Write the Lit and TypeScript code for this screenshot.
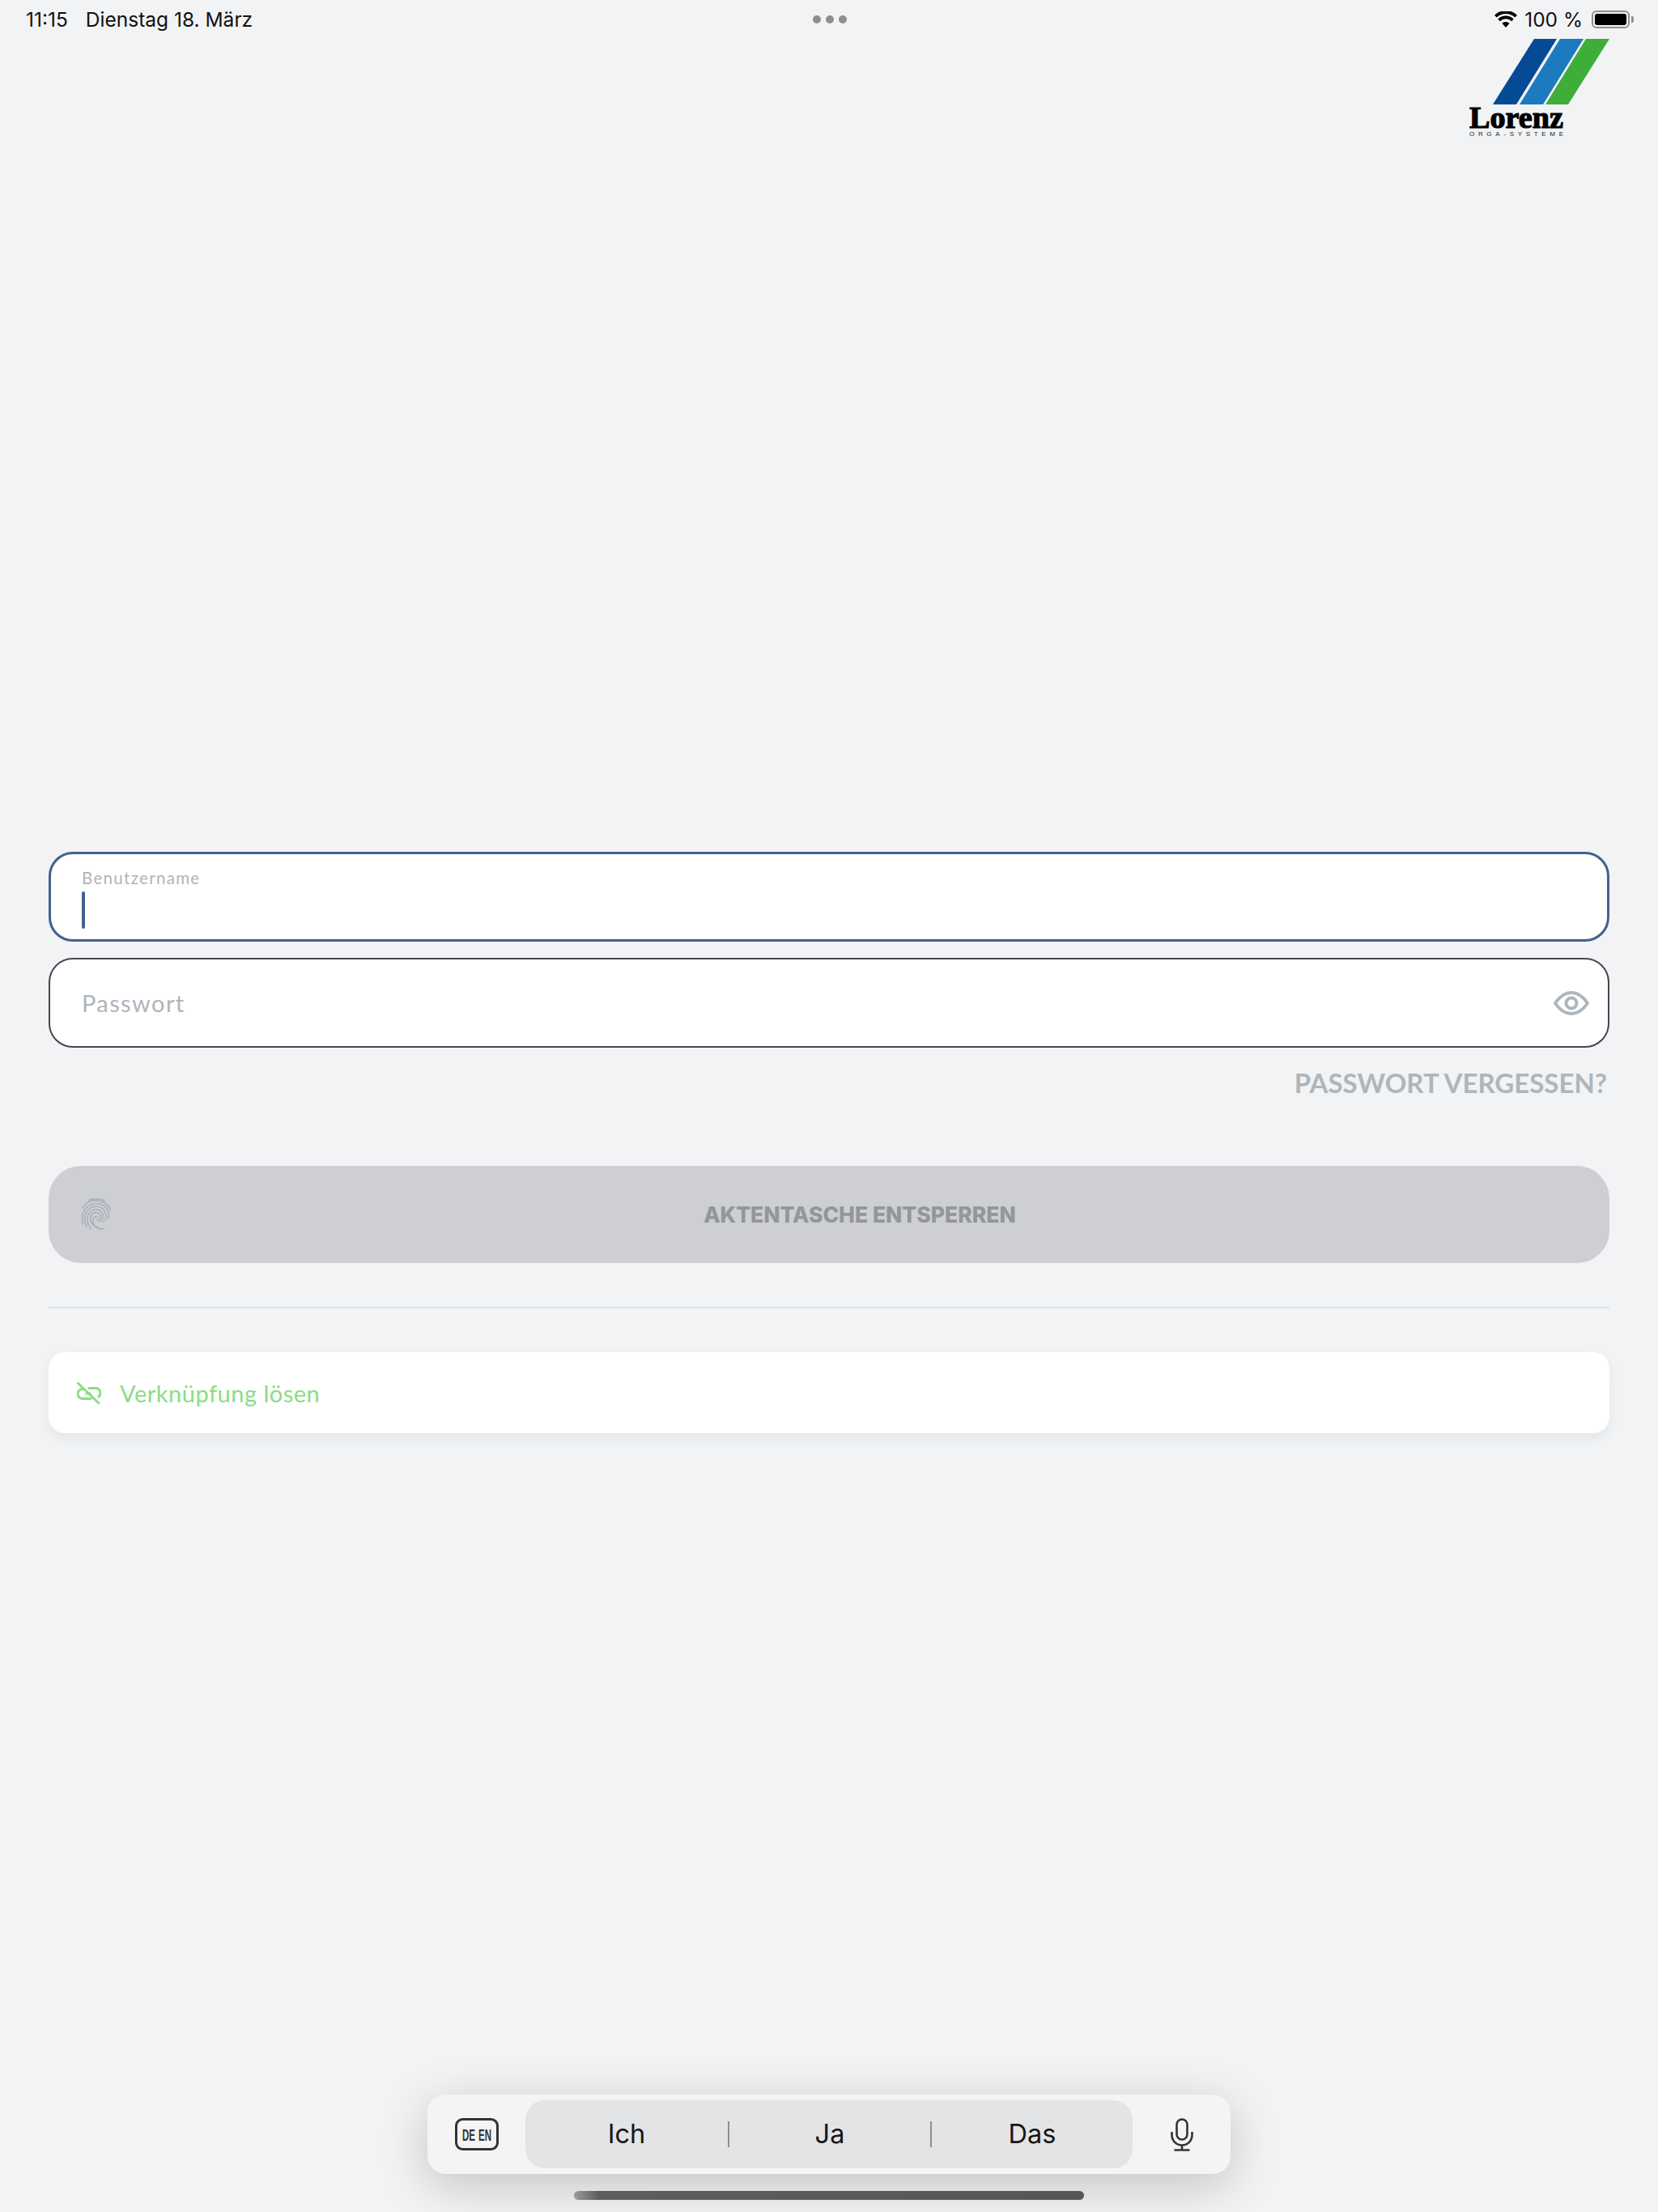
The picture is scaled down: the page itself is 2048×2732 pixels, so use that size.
import { LitElement, html, css } from "lit";
import { customElement } from "lit/decorators.js";

@customElement("app-root")
export class AppRoot extends LitElement {
  static styles = css`
    :host { display: block; }
    .page {
      min-height: 2732px; box-sizing: border-box; background: #f1f3f5;
      display: flex; flex-direction: column; overflow: hidden;
      font-family: "Lato", "Noto Sans", sans-serif;
    }
    .status {
      height: 48px; box-sizing: border-box; padding: 0 30px 0 32px;
      display: grid; grid-template-columns: 1fr auto 1fr; align-items: center;
      font-family: "Inter", sans-serif; font-size: 24.5px; color: #111;
    }
    .status-left { display: flex; gap: 22px; }
    .dots { display: flex; gap: 6px; }
    .dots i { width: 10px; height: 10px; border-radius: 50%; background: #8e8e90; }
    .status-right { display: flex; align-items: center; justify-content: flex-end; gap: 9px; }
    .battery-wrap { display: flex; align-items: center; gap: 2px; margin-left: 2px; }
    .battery { width: 47px; height: 22px; box-sizing: border-box; border: 2px solid #8f8f91; border-radius: 6px; padding: 2px; }
    .battery i { display: block; height: 100%; background: #000; border-radius: 3px; }
    .nub { width: 3px; height: 8px; background: #8f8f91; border-radius: 0 2px 2px 0; }
    .logo-row { display: flex; justify-content: flex-end; padding: 0 60px; }
    .logo { display: block; width: 173px; height: 121px; }
    .logo .name { font-family: "Liberation Serif", serif; font-weight: 700; font-size: 38px; fill: #000; stroke: #000; stroke-width: 1.2px; }
    .logo .sub { font-family: "Liberation Sans", sans-serif; font-size: 8px; fill: #222; }
    .form { margin-top: 883px; padding: 0 60px; display: flex; flex-direction: column; }
    .field {
      height: 111px; box-sizing: border-box; background: #fff; border-radius: 30px;
      position: relative; display: flex; align-items: center;
    }
    .field.focus { border: 3px solid #43608f; flex-direction: column; align-items: flex-start; padding: 17px 0 0 38px; }
    .field.pass { border: 2px solid #44454f; margin-top: 20px; padding: 0 23px 0 39px; justify-content: space-between; }
    .mini { font-size: 20.5px; line-height: 24px; letter-spacing: 1.3px; color: #adb5bd; }
    .caret { width: 4px; height: 46px; margin-top: 5px; border-radius: 2px; background: #43608f; }
    .ph { font-size: 29px; letter-spacing: 1.4px; color: #adb5bd; }
    .eye { width: 44px; height: 30px; display: block; }
    .forgot {
      align-self: flex-end; margin: 23px 3px 0 0; font-size: 33px; line-height: 40px;
      font-weight: 700; color: #aeb6bc; white-space: nowrap;
    }
    .unlock {
      margin-top: 83px; height: 120px; border-radius: 40px; background: #cdcfd2;
      display: flex; align-items: center; padding-left: 40px; position: relative;
    }
    .fp { width: 38px; height: 42px; display: block; }
    .unlock span {
      flex: 1; text-align: center; margin-left: -2px; font-family: "Inter", sans-serif; font-weight: 800;
      font-size: 26.5px; color: #93969a; white-space: nowrap; padding-left: 0;
    }
    .rule { height: 2px; background: #dde2e7; margin-top: 54px; }
    .card {
      margin-top: 54px; height: 100px; border-radius: 20px; background: #fff;
      box-shadow: 0 6px 14px rgba(40, 50, 60, 0.07);
      display: flex; align-items: center; padding-left: 35px; gap: 23px;
    }
    .card svg { width: 30px; height: 27px; display: block; }
    .card span { font-size: 29px; letter-spacing: 0.5px; color: #8bdc86; }
    .dock { margin-top: auto; display: flex; flex-direction: column; align-items: center; padding-bottom: 15px; }
    .bar {
      width: 992px; height: 98px; box-sizing: border-box; border-radius: 22px; background: #f4f4f6;
      box-shadow: 0 14px 60px rgba(0, 0, 0, 0.2);
      display: grid; grid-template-columns: 121px 750px 121px; padding-top: 7px;
    }
    .slot { display: flex; justify-content: center; height: 84px; align-items: center; }
    .slot svg { display: block; }
    .de { font-family: "Liberation Sans", sans-serif; font-weight: 700; font-size: 21px; fill: #333; }
    .sugg {
      height: 84px; background: #e3e4e6; border-radius: 24px;
      display: grid; grid-template-columns: repeat(3, 1fr); align-items: center;
      font-family: "Inter", sans-serif; font-size: 32.5px; color: #161616; text-align: center;
    }
    .sugg div { height: 32px; line-height: 32px; }
    .sugg div + div { border-left: 2px solid #8e8e90; }
    .home { width: 630px; height: 11px; margin-top: 21px; border-radius: 6px; background: linear-gradient(90deg, #9a9b9b 0, #5d5f5f 30px, #555757 100%); position: relative; }
  `;

  render() {
    return html`<div class="page">
      <div class="status">
        <div class="status-left"><span>11:15</span><span>Dienstag 18. März</span></div>
        <div class="dots"><i></i><i></i><i></i></div>
        <div class="status-right">
          <svg width="28" height="20" viewBox="0 0 28 20"><path d="M14 20l-4.600-5.200a6.500 6.500 0 0 1 9.200 0zM6.800 12.200l-2.500-2.800a13.800 13.800 0 0 1 19.400 0l-2.500 2.800a10.200 10.200 0 0 0-14.400 0zM2.700 7.600L0 4.700a20 20 0 0 1 28 0l-2.700 2.900a16.200 16.200 0 0 0-22.600 0z" fill="#000"/></svg>
          <span>100 %</span>
          <div class="battery-wrap"><div class="battery"><i></i></div><div class="nub"></div></div>
        </div>
      </div>
      <div class="logo-row">
        <svg class="logo" viewBox="0 0 173 121">
          <polygon points="80,0 108,0 58,81 29,81" fill="#044a94"/>
          <polygon points="112,0 141,0 91,81 62,81" fill="#1c7abf"/>
          <polygon points="144,0 173,0 122,81 94,81" fill="#3fae39"/>
          <text class="name" x="0" y="110" textLength="116" lengthAdjust="spacingAndGlyphs">Lorenz</text>
          <text class="sub" x="0" y="120" textLength="116">ORGA-SYSTEME</text>
        </svg>
      </div>
      <div class="form">
        <div class="field focus"><div class="mini">Benutzername</div><div class="caret"></div></div>
        <div class="field pass">
          <span class="ph">Passwort</span>
          <svg class="eye" viewBox="0 0 44 30" fill="none" stroke="#adb5bd" stroke-width="4">
            <path d="M2 15C8 6 14 2 22 2s14 4 20 13c-6 9-12 13-20 13S8 24 2 15z"/>
            <circle cx="22" cy="15" r="6.500"/>
          </svg>
        </div>
        <div class="forgot">PASSWORT VERGESSEN?</div>
        <div class="unlock">
          <svg class="fp" viewBox="0 0 38 42" fill="none" stroke="#a9b3bb" stroke-width="1.700" stroke-linecap="round">
            <path d="M10 3.500C15 .8 23 .8 29 4"/>
            <path d="M2 13C5 7 11 3.800 18 3.800 26 3.800 33 8 36.500 15"/>
            <path d="M2.500 33C.8 27 1 19 5 14.500 9 9.500 14 7.500 19 7.500c7 0 13 4 15 10 1 3 .8 6-.6 9"/>
            <path d="M7 36C4 30 3.500 23 7 17.500c3-4.500 7.500-6.500 12-6.500 6 0 11 4 12 9.500.6 4-1 8-4 9.500"/>
            <path d="M12.500 39C8 33 6.500 26 9.500 20.500 12 16 16 14.500 19.500 14.800c4.500.4 8 4 7.800 8.500-.2 3.500-3 6-6 5.600"/>
            <path d="M21 37.500C15 35 10.500 30 12 24c1-4 4.500-6 7.500-5.500 3 .4 5 3 4.500 5.500-.4 2-2.500 3-4 2.300"/>
            <path d="M28 38.500c-3 .8-6 .4-9-1.500-3-2-5-6-3.800-10 .8-2.500 2.800-4.200 5-3.500"/>
          </svg>
          <span>AKTENTASCHE ENTSPERREN</span>
        </div>
        <div class="rule"></div>
        <div class="card">
          <svg viewBox="0 0 30 27" fill="none" stroke="#8bdc86" stroke-width="3" stroke-linecap="round">
            <path d="M1.500 1.500L27 26"/>
            <path d="M8 8.500H7a6 6 0 0 0 0 12h10"/>
            <path d="M15 7.500h8a6 6 0 0 1 4 10.500"/>
            <path d="M12 14h4"/>
          </svg>
          <span>Verknüpfung lösen</span>
        </div>
      </div>
      <div class="dock">
        <div class="bar">
          <div class="slot">
            <svg width="54" height="40" viewBox="0 0 54 40">
              <rect x="1.500" y="1.500" width="51" height="37" rx="8" fill="none" stroke="#333" stroke-width="3"/>
              <text class="de" x="9" y="28" textLength="16" lengthAdjust="spacingAndGlyphs">DE</text>
              <text class="de" x="29" y="28" textLength="16" lengthAdjust="spacingAndGlyphs">EN</text>
            </svg>
          </div>
          <div class="sugg"><div>Ich</div><div>Ja</div><div>Das</div></div>
          <div class="slot">
            <svg width="28" height="41" viewBox="0 0 28 41" fill="none" stroke="#333" stroke-width="2.600">
              <rect x="7.500" y="1.500" width="13" height="25" rx="6.500"/>
              <path d="M1.500 17v4a12.500 12.500 0 0 0 25 0v-4M14 33.500V39M4.500 39.500h19"/>
            </svg>
          </div>
        </div>
        <div class="home"></div>
      </div>
    </div>`;
  }
}
